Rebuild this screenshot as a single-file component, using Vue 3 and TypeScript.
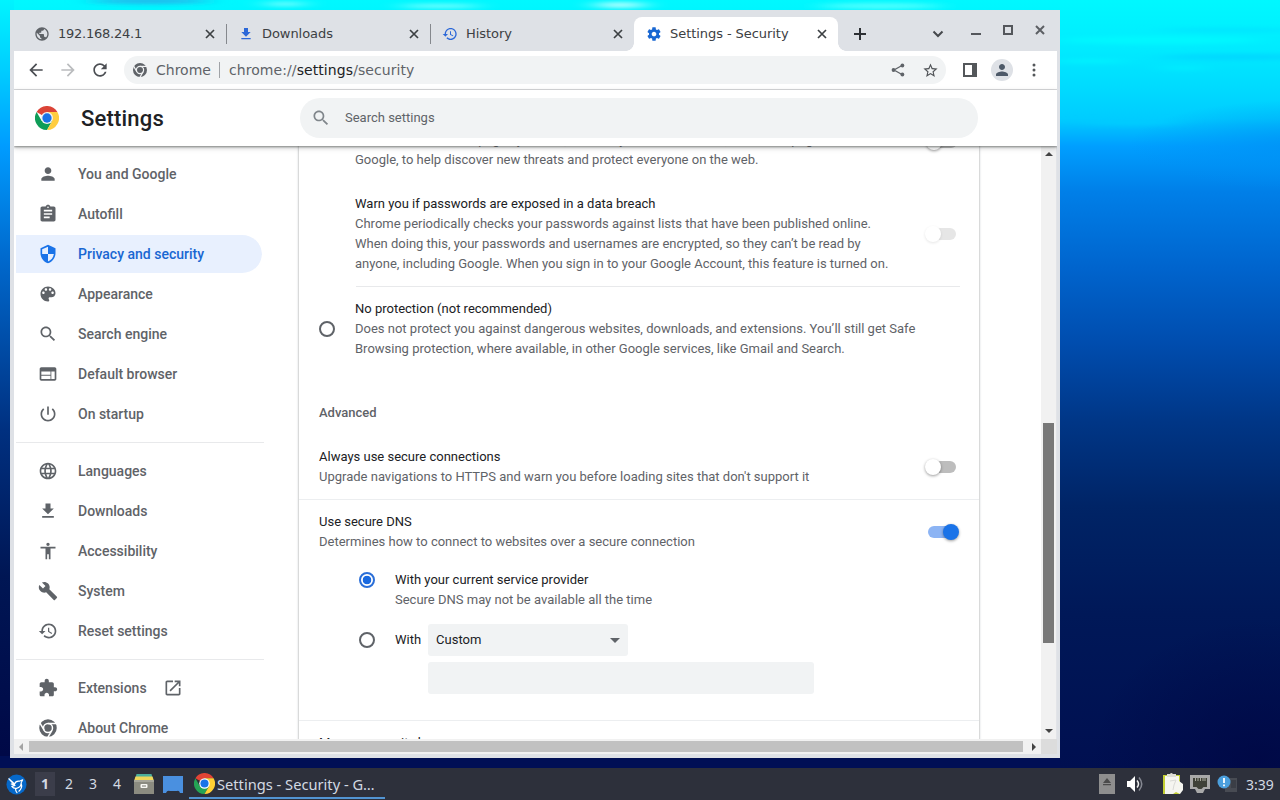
<script setup lang="ts">
interface NavItem { label: string; icon: string; active?: boolean; external?: boolean }
interface Tab { title: string; icon: string; color: string; active?: boolean }

const icons: Record<string, string> = {
  person: 'M12 12c2.21 0 4-1.79 4-4s-1.79-4-4-4-4 1.79-4 4 1.79 4 4 4zm0 2c-2.67 0-8 1.34-8 4v2h16v-2c0-2.66-5.33-4-8-4z',
  autofill: 'M19 3h-4.18C14.4 1.84 13.3 1 12 1s-2.4.84-2.82 2H5c-1.1 0-2 .9-2 2v14c0 1.1.9 2 2 2h14c1.1 0 2-.9 2-2V5c0-1.1-.9-2-2-2zm-7 0c.55 0 1 .45 1 1s-.45 1-1 1-1-.45-1-1 .45-1 1-1zm2 14H7v-2h7v2zm3-4H7v-2h10v2zm0-4H7V7h10v2z',
  shield: 'M12 1L3 5v6c0 5.55 3.84 10.74 9 12 5.16-1.26 9-6.45 9-12V5l-9-4zm0 10.99h7c-.53 4.12-3.28 7.79-7 8.94V12H5V6.3l7-3.11v8.8z',
  palette: 'M12 3c-4.97 0-9 4.03-9 9s4.03 9 9 9c.83 0 1.5-.67 1.5-1.5 0-.39-.15-.74-.39-1.01-.23-.26-.38-.61-.38-.99 0-.83.67-1.5 1.5-1.5H16c2.76 0 5-2.24 5-5 0-4.42-4.03-8-9-8zm-5.5 9c-.83 0-1.5-.67-1.5-1.5S5.67 9 6.5 9 8 9.67 8 10.500 7.330 12 6.500 12zm3-4C8.670 8 8 7.330 8 6.500S8.670 5 9.500 5s1.500.67 1.500 1.500S10.330 8 9.500 8zm5 0c-.83 0-1.500-.67-1.500-1.500S13.670 5 14.500 5s1.500.67 1.500 1.500S15.330 8 14.500 8zm3 4c-.83 0-1.500-.67-1.500-1.500S16.670 9 17.500 9s1.500.67 1.500 1.500-.67 1.500-1.500 1.500z',
  search: 'M15.5 14h-.79l-.28-.27C15.41 12.59 16 11.11 16 9.500 16 5.910 13.090 3 9.500 3S3 5.910 3 9.500 5.910 16 9.500 16c1.610 0 3.090-.59 4.230-1.570l.27.28v.79l5 4.990L20.490 19l-4.990-5zm-6 0C7.010 14 5 11.990 5 9.500S7.010 5 9.500 5 14 7.010 14 9.500 11.990 14 9.500 14z',
  browser: 'M20 4H4c-1.100 0-1.990.9-1.990 2L2 18c0 1.100.9 2 2 2h16c1.100 0 2-.9 2-2V6c0-1.100-.9-2-2-2zm-5 14H4v-4h11v4zm0-5H4V9h11v4zm5 5h-4V9h4v9z',
  power: 'M13 3h-2v10h2V3zm4.830 2.170l-1.420 1.420C17.990 7.860 19 9.810 19 12c0 3.870-3.130 7-7 7s-7-3.130-7-7c0-2.190 1.010-4.140 2.580-5.420L6.170 5.170C4.230 6.820 3 9.260 3 12c0 4.970 4.030 9 9 9s9-4.030 9-9c0-2.740-1.230-5.180-3.170-6.830z',
  globe: 'M11.990 2C6.470 2 2 6.480 2 12s4.470 10 9.990 10C17.520 22 22 17.520 22 12S17.520 2 11.990 2zm6.930 6h-2.950c-.32-1.250-.78-2.450-1.380-3.560 1.840.63 3.370 1.910 4.330 3.560zM12 4.040c.83 1.200 1.480 2.530 1.910 3.960h-3.820c.43-1.430 1.080-2.760 1.910-3.960zM4.260 14C4.100 13.360 4 12.690 4 12s.1-1.360.26-2h3.380c-.08.66-.14 1.320-.14 2s.06 1.340.14 2H4.260zm.82 2h2.950c.32 1.250.78 2.450 1.380 3.560-1.840-.63-3.370-1.900-4.330-3.560zm2.950-8H5.080c.96-1.660 2.490-2.930 4.330-3.560C8.810 5.550 8.350 6.750 8.030 8zM12 19.960c-.83-1.200-1.480-2.530-1.910-3.960h3.820c-.43 1.430-1.080 2.760-1.910 3.960zM14.340 14H9.660c-.09-.66-.16-1.320-.16-2s.07-1.350.16-2h4.680c.09.65.16 1.320.16 2s-.07 1.340-.16 2zm.25 5.560c.6-1.110 1.060-2.310 1.380-3.560h2.950c-.96 1.650-2.490 2.930-4.330 3.560zM16.360 14c.08-.66.14-1.320.14-2s-.06-1.340-.14-2h3.380c.16.64.26 1.310.26 2s-.1 1.360-.26 2h-3.380z',
  world: 'M12 2C6.480 2 2 6.480 2 12s4.480 10 10 10 10-4.480 10-10S17.520 2 12 2zm-1 17.930c-3.950-.49-7-3.850-7-7.930 0-.62.08-1.210.21-1.790L9 15v1c0 1.100.9 2 2 2v1.930zm6.900-2.540c-.26-.81-1-1.390-1.900-1.390h-1v-3c0-.55-.45-1-1-1H8v-2h2c.55 0 1-.45 1-1V7h2c1.100 0 2-.9 2-2v-.41c2.930 1.190 5 4.060 5 7.410 0 2.080-.8 3.970-2.100 5.390z',
  download: 'M19 9h-4V3H9v6H5l7 7 7-7zM5 18v2h14v-2H5z',
  accessibility: 'M12 2c1.100 0 2 .9 2 2s-.9 2-2 2-2-.9-2-2 .9-2 2-2zm9 7h-6v13h-2v-6h-2v6H9V9H3V7h18v2z',
  wrench: 'M22.700 19l-9.100-9.100c.9-2.300.4-5-1.500-6.900-2-2-5-2.400-7.400-1.300L9 6 6 9 1.600 4.700C.4 7.100.9 10.100 2.900 12.100c1.900 1.900 4.600 2.400 6.900 1.500l9.100 9.100c.4.400 1 .400 1.400 0l2.300-2.300c.5-.4.5-1.100.1-1.400z',
  history: 'M13 3c-4.970 0-9 4.030-9 9H1l3.890 3.890.07.14L9 12H6c0-3.870 3.130-7 7-7s7 3.130 7 7-3.130 7-7 7c-1.930 0-3.680-.79-4.940-2.060l-1.420 1.420C8.270 19.990 10.510 21 13 21c4.970 0 9-4.030 9-9s-4.030-9-9-9zm-1 5v5l4.280 2.540.72-1.210-3.500-2.080V8H12z',
  puzzle: 'M20.500 11H19V7c0-1.100-.9-2-2-2h-4V3.500C13 2.120 11.880 1 10.500 1S8 2.120 8 3.500V5H4c-1.100 0-1.990.9-1.990 2v3.800H3.500c1.490 0 2.700 1.210 2.700 2.700s-1.210 2.700-2.700 2.700H2V20c0 1.100.9 2 2 2h3.800v-1.500c0-1.490 1.210-2.700 2.700-2.700 1.490 0 2.700 1.210 2.700 2.700V22H17c1.100 0 2-.9 2-2v-4h1.500c1.380 0 2.500-1.120 2.500-2.500S21.880 11 20.500 11z',
  chrome: 'M12 1.500a10.500 10.500 0 1 0 0 21a10.500 10.500 0 1 0 0-21z',
  external: 'M19 19H5V5h7V3H5c-1.110 0-2 .9-2 2v14c0 1.100.89 2 2 2h14c1.100 0 2-.9 2-2v-7h-2v7zM14 3v2h3.590l-9.830 9.830 1.410 1.410L19 6.410V10h2V3h-7z',
  gear: 'M19.430 12.980c.04-.32.07-.64.07-.98s-.03-.66-.07-.98l2.110-1.650c.19-.15.24-.42.12-.64l-2-3.460c-.12-.22-.39-.3-.61-.22l-2.490 1c-.52-.4-1.080-.73-1.690-.98l-.38-2.650C14.460 2.180 14.250 2 14 2h-4c-.25 0-.46.18-.49.42l-.38 2.650c-.61.25-1.170.59-1.690.98l-2.490-1c-.23-.09-.49 0-.61.22l-2 3.460c-.13.22-.07.49.12.64l2.110 1.650c-.04.32-.07.65-.07.98s.03.66.07.98l-2.110 1.650c-.19.15-.24.42-.12.64l2 3.460c.12.22.39.3.61.22l2.490-1c.52.4 1.080.73 1.690.98l.38 2.650c.03.24.24.42.49.42h4c.25 0 .46-.18.49-.42l.38-2.650c.61-.25 1.170-.59 1.690-.98l2.490 1c.23.09.49 0 .61-.22l2-3.460c.12-.22.07-.49-.12-.64l-2.110-1.650zM12 15.500c-1.930 0-3.500-1.570-3.500-3.500s1.570-3.500 3.500-3.500 3.500 1.570 3.500 3.500-1.570 3.500-3.500 3.500z',
  back: 'M20 11H7.830l5.590-5.590L12 4l-8 8 8 8 1.410-1.410L7.830 13H20v-2z',
  forward: 'M12 4l-1.410 1.410L16.170 11H4v2h12.170l-5.580 5.590L12 20l8-8z',
  reload: 'M17.650 6.350C16.200 4.900 14.210 4 12 4c-4.420 0-7.990 3.580-7.990 8s3.570 8 7.990 8c3.730 0 6.840-2.550 7.730-6h-2.080c-.82 2.330-3.040 4-5.650 4-3.310 0-6-2.690-6-6s2.690-6 6-6c1.660 0 3.140.69 4.220 1.780L13 11h7V4l-2.350 2.350z',
  star: 'M22 9.240l-7.190-.62L12 2 9.190 8.630 2 9.240l5.460 4.730L5.820 21 12 17.270 18.180 21l-1.630-7.030L22 9.240zM12 15.400l-3.760 2.270 1-4.280-3.320-2.880 4.380-.38L12 6.100l1.710 4.040 4.380.38-3.320 2.880 1 4.280L12 15.400z',
}

const tabs: Tab[] = [
  { title: '192.168.24.1', icon: 'world', color: '#5f6368' },
  { title: 'Downloads', icon: 'download', color: '#2c68d8' },
  { title: 'History', icon: 'history', color: '#2c68d8' },
  { title: 'Settings - Security', icon: 'gear', color: '#1967d2', active: true },
]

const groups: NavItem[][] = [
  [
    { label: 'You and Google', icon: 'person' },
    { label: 'Autofill', icon: 'autofill' },
    { label: 'Privacy and security', icon: 'shield', active: true },
    { label: 'Appearance', icon: 'palette' },
    { label: 'Search engine', icon: 'search' },
    { label: 'Default browser', icon: 'browser' },
    { label: 'On startup', icon: 'power' },
  ],
  [
    { label: 'Languages', icon: 'globe' },
    { label: 'Downloads', icon: 'download' },
    { label: 'Accessibility', icon: 'accessibility' },
    { label: 'System', icon: 'wrench' },
    { label: 'Reset settings', icon: 'history' },
  ],
  [
    { label: 'Extensions', icon: 'puzzle', external: true },
    { label: 'About Chrome', icon: 'chrome' },
  ],
]
const desktops = ['1', '2', '3', '4']
</script>

<template>
  <div class="desktop">
    <svg class="wallpaper" viewBox="0 0 1280 768" preserveAspectRatio="none">
      <defs>
        <linearGradient id="sea" x1="0" y1="0" x2="0" y2="1">
          <stop offset="0" stop-color="#00f8ff" />
          <stop offset=".06" stop-color="#00ecff" />
          <stop offset=".11" stop-color="#00dcff" />
          <stop offset=".155" stop-color="#00ccff" />
          <stop offset=".19" stop-color="#009fff" />
          <stop offset=".25" stop-color="#007fe8" />
          <stop offset=".35" stop-color="#0064cd" />
          <stop offset=".45" stop-color="#004cad" />
          <stop offset=".55" stop-color="#003686" />
          <stop offset=".66" stop-color="#002466" />
          <stop offset=".8" stop-color="#001858" />
          <stop offset="1" stop-color="#000f50" />
        </linearGradient>
        <linearGradient id="leftsea" x1="0" y1="0" x2="0" y2="1">
          <stop offset="0" stop-color="#00f4ff" />
          <stop offset=".09" stop-color="#00ceff" />
          <stop offset=".19" stop-color="#009cff" />
          <stop offset=".34" stop-color="#0068cc" />
          <stop offset=".56" stop-color="#003080" />
          <stop offset=".75" stop-color="#001654" />
          <stop offset="1" stop-color="#000846" />
        </linearGradient>
        <radialGradient id="deep"><stop offset="0" stop-color="#000642" stop-opacity=".7" /><stop offset="1" stop-color="#000642" stop-opacity="0" /></radialGradient>
        <radialGradient id="dusk"><stop offset="0" stop-color="#0090f4" stop-opacity=".7" /><stop offset="1" stop-color="#0090f4" stop-opacity="0" /></radialGradient>
        <filter id="soft" x="-20%" y="-200%" width="140%" height="500%"><feGaussianBlur stdDeviation="12 2" /></filter>
        <mask id="chrome-gaps" maskUnits="userSpaceOnUse" x="0" y="0" width="24" height="24">
          <path d="M0 0h24v24H0z" fill="#fff" />
          <g fill="none" stroke="#000" stroke-width="1.800">
            <circle cx="12" cy="12" r="5.400" />
            <path id="gap" d="M12 6.600h12" />
            <path d="M12 6.600h12" transform="rotate(120 12 12)" />
            <path d="M12 6.600h12" transform="rotate(240 12 12)" />
          </g>
        </mask>
      </defs>
      <rect width="1280" height="768" fill="url(#sea)" />
      <rect width="14" height="768" fill="url(#leftsea)" />
      <rect y="756" width="1060" height="12" fill="#000f55" />
      <ellipse cx="1300" cy="145" rx="170" ry="45" fill="url(#dusk)" />
      <ellipse cx="1260" cy="760" rx="170" ry="140" fill="url(#deep)" />
      <g filter="url(#soft)">
        <ellipse cx="150" cy="1" rx="60" ry="3" fill="#20b8ec" />
        <ellipse cx="285" cy="4" rx="20" ry="2" fill="#8fffff" />
        <ellipse cx="440" cy="6" rx="40" ry="2" fill="#80ffff" />
        <ellipse cx="620" cy="5" rx="26" ry="3" fill="#b8ffff" />
        <ellipse cx="880" cy="6" rx="60" ry="3" fill="#50ffff" />
        <ellipse cx="1160" cy="40" rx="100" ry="4" fill="#00f8ff" />
        <ellipse cx="1090" cy="61" rx="35" ry="2" fill="#00f4ff" />
        <ellipse cx="1184" cy="68" rx="24" ry="2" fill="#00f0ff" />
        <ellipse cx="1230" cy="30" rx="70" ry="2" fill="#00e4ff" />
        <ellipse cx="1240" cy="57" rx="80" ry="3" fill="#00d8ff" />
        <ellipse cx="1130" cy="122" rx="50" ry="3" fill="#00ccff" />
      </g>
    </svg>

    <section class="window">
      <header class="tabstrip">
        <div v-for="t in tabs" :key="t.title" class="tab" :class="{ active: t.active }">
          <svg class="favicon" viewBox="0 0 24 24"><path :d="icons[t.icon]" :fill="t.color" /></svg>
          <span class="tab-title">{{ t.title }}</span>
          <svg class="close" viewBox="0 0 10 10"><path d="M1 1l8 8M9 1l-8 8" stroke="#3c4043" stroke-width="1.700" /></svg>
        </div>
        <svg class="plus" viewBox="0 0 12 12"><path d="M6 0v12M0 6h12" stroke="#2d3034" stroke-width="2" /></svg>
        <div class="controls">
          <svg width="12" height="8" viewBox="0 0 12 8"><path d="M1.500 1.500L6 6l4.500-4.500" fill="none" stroke="#45484c" stroke-width="2" /></svg>
          <svg class="mini" width="10" height="2" viewBox="0 0 10 2"><path d="M0 1h10" stroke="#54575c" stroke-width="2" /></svg>
          <svg class="maxi" width="10" height="10" viewBox="0 0 10 10"><path d="M1 1h8v8H1z" fill="none" stroke="#54575c" stroke-width="2" /></svg>
          <svg class="shut" width="10" height="10" viewBox="0 0 10 10"><path d="M1 1l8 8M9 1L1 9" stroke="#5c5f64" stroke-width="2" /></svg>
        </div>
      </header>

      <div class="client">
        <div class="toolbar">
          <div class="nav-buttons">
            <svg viewBox="0 0 24 24"><path :d="icons.back" fill="#4b4e53" /></svg>
            <svg viewBox="0 0 24 24"><path :d="icons.forward" fill="#babcbe" /></svg>
            <svg viewBox="0 0 24 24"><path :d="icons.reload" fill="#4b4e53" /></svg>
          </div>
          <div class="omnibox">
            <svg class="site" viewBox="0 0 24 24"><path :d="icons.chrome" fill="#5f6368" mask="url(#chrome-gaps)" /></svg>
            <span>Chrome</span>
            <i class="bar"></i>
            <span class="url">chrome://<b>settings</b>/security</span>
            <svg class="share" viewBox="0 0 14 14"><path d="M11 2.500L3 7l8 4.500" fill="none" stroke="#5f6368" stroke-width="1.300" /><circle cx="11.400" cy="2.500" r="1.900" fill="#5f6368" /><circle cx="2.500" cy="7" r="1.900" fill="#5f6368" /><circle cx="11.400" cy="11.500" r="1.900" fill="#5f6368" /></svg>
            <svg class="star" viewBox="0 0 24 24"><path :d="icons.star" fill="#505357" /></svg>
          </div>
          <svg class="panel" viewBox="0 0 14 14"><path d="M0 0h14v14H0zM2 2v10h7V2z" fill="#54575a" fill-rule="evenodd" /></svg>
          <span class="avatar"><svg viewBox="0 0 24 24"><path :d="icons.person" fill="#4d5968" /></svg></span>
          <svg class="dots" viewBox="0 0 4 14"><circle cx="2" cy="2" r="1.500" /><circle cx="2" cy="7" r="1.500" /><circle cx="2" cy="12" r="1.500" /></svg>
        </div>

        <div class="header">
          <svg class="logo" viewBox="0 0 48 48">
            <path d="M24 24L3.200 12A24 24 0 0 1 44.800 12H24z" fill="#db4437" />
            <path d="M24 24L13.600 30 3.200 12A24 24 0 0 0 24 48l10.400-18z" fill="#0f9d58" />
            <path d="M24 12h20.800A24 24 0 0 1 24 48l10.400-18z" fill="#ffcd40" />
            <circle cx="24" cy="24" r="12" fill="#f1f1f1" /><circle cx="24" cy="24" r="9.300" fill="#1a73e8" />
          </svg>
          <h1>Settings</h1>
          <div class="search"><svg viewBox="0 0 24 24"><path :d="icons.search" fill="#80868b" /></svg><span>Search settings</span></div>
        </div>

        <div class="body">
          <nav>
            <div v-for="(g, i) in groups" :key="i" class="group">
              <div v-for="n in g" :key="n.label" class="item" :class="{ active: n.active }">
                <svg viewBox="0 0 24 24"><path :d="icons[n.icon]" :mask="n.icon === 'chrome' ? 'url(#chrome-gaps)' : undefined" /></svg>
                <span>{{ n.label }}</span>
                <svg v-if="n.external" class="ext" viewBox="0 0 24 24"><path :d="icons.external" /></svg>
              </div>
            </div>
          </nav>

          <main>
            <div class="row nested first">
              <p><small>Sends URLs of some pages you visit, limited system information, and some page content to<br>Google, to help discover new threats and protect everyone on the web.</small></p>
              <span class="toggle"></span>
            </div>
            <div class="row nested breach">
              <p>Warn you if passwords are exposed in a data breach<br><small>Chrome periodically checks your passwords against lists that have been published online.<br>When doing this, your passwords and usernames are encrypted, so they can’t be read by<br>anyone, including Google. When you sign in to your Google Account, this feature is turned on.</small></p>
              <span class="toggle disabled"></span>
            </div>
            <div class="row none">
              <span class="radio"></span>
              <p>No protection (not recommended)<br><small>Does not protect you against dangerous websites, downloads, and extensions. You’ll still get Safe<br>Browsing protection, where available, in other Google services, like Gmail and Search.</small></p>
            </div>
            <h2>Advanced</h2>
            <div class="row always">
              <p>Always use secure connections<br><small>Upgrade navigations to HTTPS and warn you before loading sites that don't support it</small></p>
              <span class="toggle"></span>
            </div>
            <div class="row dns">
              <p>Use secure DNS<br><small>Determines how to connect to websites over a secure connection</small></p>
              <span class="toggle on"></span>
            </div>
            <div class="row option">
              <span class="radio checked"></span>
              <p>With your current service provider<br><small>Secure DNS may not be available all the time</small></p>
            </div>
            <div class="row custom">
              <span class="radio"></span>
              <p>With</p>
              <div class="select"><span>Custom</span><i></i></div>
            </div>
            <div class="field"></div>
            <div class="row keys"><p>Manage security keys</p></div>
          </main>

          <div class="vscroll"><i class="arrow up"></i><i class="thumb"></i><i class="arrow down"></i></div>
        </div>
        <div class="hscroll"><i class="arrow left"></i><i class="thumb"></i><i class="arrow right"></i><i class="corner"></i></div>
      </div>
    </section>

    <footer class="taskbar">
      <svg class="menu" viewBox="0 0 22 22">
        <circle cx="11" cy="11" r="10.500" fill="#0668c9" />
        <path d="M3 5l6 5.500q1-3.500 5-3l3.500-1.500-1.500 3q0 5-5 6-3 .5-5-2l3.500-1L5.500 10.500l3 .5z" fill="#0668c9" stroke="#fff" stroke-width="1.200" stroke-linejoin="round" />
        <path d="M10 15.500q0 2.500 1.500 4M16 10.500q1.500 4-2.500 7.500" fill="none" stroke="#fff" stroke-width="1.300" stroke-linecap="round" />
      </svg>
      <span v-for="d in desktops" :key="d" class="desk" :class="{ current: d === '1' }">{{ d }}</span>
      <svg class="files" viewBox="0 0 20 20"><path d="M2.500 0h15l1 4h-17z" fill="#4caf9c" /><path d="M1.500 2.500h17L20 7H0z" fill="#f0d65a" /><path d="M0 6h20v14H0z" fill="#8b8b80" /><path d="M0 6h20v2H0z" fill="#a6a69a" /><rect x="6.500" y="10" width="7" height="4" rx="1" fill="#f8f8f2" /><path d="M8 12h4" stroke="#77776f" /></svg>
      <svg class="show" viewBox="0 0 20 17"><path d="M0 0h20v17h-3q-1-3-3-2H7q-3-1-4 2H0z" fill="#4a90e0" /></svg>
      <div class="task">
        <svg viewBox="0 0 48 48"><path d="M24 24L3.200 12A24 24 0 0 1 44.800 12H24z" fill="#e24435" /><path d="M24 24L13.600 30 3.200 12A24 24 0 0 0 24 48l10.400-18z" fill="#24a454" /><path d="M24 12h20.800A24 24 0 0 1 24 48l10.400-18z" fill="#ffd034" /><circle cx="24" cy="24" r="12" fill="#fff" /><circle cx="24" cy="24" r="9.300" fill="#1a73e8" /></svg>
        <span>Settings - Security - G…</span>
      </div>
      <div class="tray">
        <svg class="eject" viewBox="0 0 16 20"><path d="M0 0h16v20H0z" fill="#8e8e8e" /><path d="M8 4l4 5H4zM4 10h8v1.300H4z" fill="#4b4b4b" /></svg>
        <svg class="volume" viewBox="0 0 16 16"><path d="M0 5h3l5-5v16l-5-5H0z" fill="#fff" /><path d="M10 4.500q3 3.500 0 7" fill="none" stroke="#eee" stroke-width="1.500" /><path d="M12 1.500q5.500 6.500 0 13" fill="none" stroke="#858892" stroke-width="1.500" /></svg>
        <svg class="clip" viewBox="0 0 20 22"><path d="M0 2h17v19H0z" fill="#c3cf34" /><path d="M2 3h14v5l4 3v6l-3 4-4-2-3 2H2z" fill="#f5f5f0" /><path d="M4 1h3q1-2 3 0h3v3H4z" fill="#ddddd5" /><path d="M7 8l6-1-2 5-1 5" fill="none" stroke="#dadad6" /></svg>
        <svg class="net" viewBox="0 0 20 18"><path d="M0 0h20v14h-5l-2 4H7l-2-4H0z" fill="#a9a9a9" /><path d="M3 3h14v9h-3.500l-2 2h-3l-2-2H3z" fill="#3f4138" /><path d="M5.500 3v3M8 3v3M10.500 3v3M13 3v3M15 3v3" stroke="#c5c5b9" stroke-width=".8" /></svg>
        <svg class="update" viewBox="0 0 20 18"><path d="M8 3h12v14H8z" fill="#484b53" /><path d="M14 5h5v8h-5z" fill="#3b3e46" /><circle cx="7" cy="7" r="6.500" fill="#4b9fdd" /><path d="M7 3v5M7 9.500v1.800" stroke="#fff" stroke-width="1.800" /></svg>
        <span class="clock">3:39</span>
      </div>
    </footer>
  </div>
</template>

<style>
body { margin: 0; overflow: hidden; }
</style>

<style scoped>
* { box-sizing: border-box; }
svg { display: block; flex: none; }
.desktop { position: relative; width: 1280px; height: 800px; overflow: hidden; display: flex; flex-direction: column; background: #001050; font-family: Roboto, "Liberation Sans", sans-serif; }
.wallpaper { position: absolute; left: 0; top: 0; width: 1280px; height: 768px; }
.window { position: relative; width: 1050px; height: 748px; margin: 10px 0 10px 10px; padding: 0 3px 4px 4px; background: #dee1e6; display: flex; flex-direction: column; }
.tabstrip { height: 41px; flex: none; display: flex; padding: 7px 0 0 8px; font: 13px "DejaVu Sans", sans-serif; color: #3c4043; }
.tab { position: relative; width: 204px; height: 34px; display: flex; align-items: center; padding: 0 11px 0 12px; }
.tab::after { content: ''; position: absolute; right: -1px; top: 7px; width: 1px; height: 20px; background: #85888d; }
.tab:nth-child(3)::after, .tab.active::after { display: none; }
.tab.active { background: #fff; border-radius: 8px 8px 0 0; }
.tab.active::before { content: ''; position: absolute; left: -8px; right: -8px; bottom: 0; height: 8px; background: radial-gradient(circle at 0 0, transparent 7.500px, #fff 8px) left / 8px 8px no-repeat, radial-gradient(circle at 100% 0, transparent 7.500px, #fff 8px) right / 8px 8px no-repeat; }
.favicon { width: 16px; height: 16px; margin-right: 8px; }
.tab-title { flex: 1; white-space: nowrap; padding-bottom: 2px; letter-spacing: -.06px; }
.tab:first-child .tab-title { letter-spacing: -.24px; }
.close { width: 10px; height: 10px; }
.plus { width: 12px; height: 12px; margin: 11px 0 0 16px; }
.controls { display: flex; gap: 22px; margin-left: 66px; }
.controls svg { margin-top: 13px; }
.controls .mini { margin: 16px 0 0 5px; }
.controls .maxi, .controls .shut { margin-top: 8px; }
.client { flex: 1; min-height: 0; display: flex; flex-direction: column; background: #fff; overflow: hidden; }
.toolbar { height: 39px; flex: none; display: flex; align-items: center; border-bottom: 1px solid #dcdddf; padding-left: 12px; }
.nav-buttons { display: flex; gap: 12px; width: 98px; }
.nav-buttons svg { width: 20px; height: 20px; }
.omnibox { width: 822px; height: 28px; border-radius: 14px; background: #f1f3f4; display: flex; align-items: center; padding-left: 8px; font: 14px "DejaVu Sans", sans-serif; color: #5f6368; white-space: nowrap; }
.site { width: 16px; height: 16px; margin-right: 8px; }
.bar { width: 1px; height: 16px; background: #a0a3a7; margin: 0 9px 0 8px; }
.url { flex: 1; letter-spacing: .08px; }
.url b { font-weight: 400; color: #202124; }
.share { width: 14px; height: 14px; margin-right: 17px; }
.star { width: 17px; height: 17px; margin-right: 7px; }
.panel { width: 14px; height: 14px; margin-left: 17px; }
.avatar { width: 22px; height: 22px; border-radius: 50%; background: #dee1e6; margin-left: 14px; display: grid; place-items: center; }
.avatar svg { width: 18px; height: 18px; }
.dots { width: 4px; height: 14px; margin-left: 19px; fill: #54575a; }
.header { position: relative; z-index: 2; height: 56px; flex: none; display: flex; align-items: center; background: #fff; padding-left: 21px; box-shadow: 0 1px 2px rgba(60,64,60,.55), 0 2px 5px rgba(60,64,67,.25); }
.logo { width: 24px; height: 24px; }
h1 { margin: 2px 0 0 22px; width: 219px; font-size: 22px; font-weight: 500; line-height: 28px; color: #202124; letter-spacing: .2px; }
.search { width: 678px; height: 40px; border-radius: 20px; background: #f1f3f4; display: flex; align-items: center; gap: 14px; padding-left: 11px; font-size: 13px; color: #5f6368; }
.search span { padding-bottom: 1px; }
.search svg { width: 20px; height: 20px; }
.body { flex: 1; min-height: 0; display: flex; overflow: hidden; }
nav { width: 285px; flex: none; padding: 8px 0 0 2px; overflow: hidden; }
.group + .group { border-top: 1px solid #e8e9eb; margin-top: 8px; padding-top: 8px; }
.group { width: 248px; }
.item { width: 246px; height: 40px; display: flex; align-items: center; padding-left: 22px; font-size: 14px; font-weight: 500; color: #5f6368; border-top: 1px solid transparent; border-bottom: 1px solid transparent; background-clip: padding-box; border-radius: 0 20px 20px 0; }
.item > svg { width: 20px; height: 20px; fill: #5f6368; }
.item span { margin-left: 20px; }
.item.active { background-color: #e8f0fe; color: #1967d2; }
.item.active svg { fill: #1a73e8; }
.item svg.ext { margin-left: 16px; }
main { width: 680px; height: 660px; margin-top: -16px; flex: none; font-size: 13px; line-height: 20px; color: #202124; box-shadow: 0 0 2px rgba(60,64,67,.4), 0 1px 3px rgba(60,64,67,.18); background: #fff; }
p { margin: 0; white-space: nowrap; flex: none; }
small { font-size: 13px; color: #5f6368; }
.row { display: flex; align-items: center; padding: 0 20px; }
.nested { padding-left: 56px; }
.first { height: 40px; }
.first .toggle { margin-top: -16px; margin-right: 2px; }
.breach { height: 117px; padding-top: 24px; align-items: flex-start; margin: 0 19px 0 57px; padding-left: 0; padding-right: 1px; border-bottom: 1px solid #e8e9eb; }
.breach p { margin-left: -1px; }
.breach .toggle { margin-top: 34px; }
.none { height: 60px; margin-top: 12px; }
.none .radio { margin-right: 20px; }
h2 { font-size: 13px; line-height: 20px; font-weight: 500; color: #5f6368; margin: 44px 20px 24px; }
.always { height: 53px; align-items: flex-start; border-bottom: 1px solid #eceef0; }
.always .toggle { margin-top: 14px; }
.dns { height: 40px; margin-top: 12px; }
.option { height: 40px; margin-top: 18px; padding-left: 60px; align-items: flex-start; }
.option .radio, .custom .radio { margin-right: 20px; }
.option .radio { margin-top: 2px; }
.custom { height: 32px; margin-top: 14px; padding-left: 60px; }
.select { width: 200px; height: 32px; background: #f1f3f4; border-radius: 3px; margin-left: 7px; padding: 0 8px; display: flex; align-items: center; justify-content: space-between; }
.select i { border: 5px solid transparent; border-top-color: #5f6368; border-bottom: 0; }
.field { width: 386px; height: 32px; margin: 6px 0 26px 129px; background: #f1f3f4; border-radius: 3px; }
.keys { border-top: 1px solid #eceef0; padding-top: 12px; }
.radio { width: 16px; height: 16px; flex: none; border: 2px solid #5f6368; border-radius: 50%; }
.radio.checked { border-color: #2b6fd8; background: radial-gradient(circle, #1a6ae0 0 4px, #fff 4.600px); }
.toggle { position: relative; width: 28px; height: 12px; margin-left: auto; margin-right: 3px; border-radius: 6px; background: #bdbdbd; flex: none; }
.toggle::after { content: ''; position: absolute; width: 16px; height: 16px; left: -3px; top: -2px; border-radius: 50%; background: #fff; box-shadow: 0 1px 3px rgba(0,0,0,.4); }
.toggle.disabled { background: #e6e6e6; }
.toggle.disabled::after { box-shadow: 0 1px 3px rgba(0,0,0,.1); }
.toggle.on { background: #8cb4f4; }
.toggle.on::after { left: 15px; background: #1a73e8; }
.vscroll { width: 16px; margin-left: auto; background: #f1f1f1; border-right: 1px solid #e2e4e8; display: flex; flex-direction: column; align-items: center; padding: 6px 0; }
.vscroll .thumb { width: 11px; height: 220px; background: #787878; margin-top: 267px; }
.arrow { width: 0; height: 0; border: 4px solid transparent; }
.up { border-top: 0; border-bottom-color: #444; }
.down { border-bottom: 0; border-top-color: #444; margin-top: auto; }
.hscroll { height: 15px; flex: none; display: flex; align-items: center; background: #f1f1f1; padding-left: 5px; }
.hscroll .thumb { width: 994px; height: 11px; background: #c1c1c1; margin-left: 6px; }
.left { border-left: 0; border-right-color: #a3a3a3; }
.right { border-right: 0; border-left-color: #444; margin-left: 9px; }
.corner { width: 16px; height: 15px; margin-left: auto; background: #dcdcdc; }
.taskbar { position: relative; height: 32px; flex: none; background: #2d303b; display: flex; align-items: center; padding-left: 6px; font: 14.670px "Noto Sans", sans-serif; color: #d3dae3; }
.menu { width: 21px; height: 21px; margin-right: 8px; }
.desk { width: 20px; height: 24px; margin-right: 4px; text-align: center; line-height: 24px; font-size: 14px; }
.desk.current { background: #3b3d4a; font-weight: 700; }
.files { width: 20px; height: 20px; margin-left: 3px; }
.show { width: 20px; height: 17px; margin-left: 9px; }
.task { height: 31px; width: 196px; margin-left: 6px; margin-bottom: 1px; display: flex; align-items: center; padding: 2px 0 0 5px; border-bottom: 2px solid #5294d2; white-space: nowrap; }
.task svg { width: 21px; height: 21px; }
.task span { margin-left: 2px; }
.tray { margin-left: auto; display: flex; align-items: center; padding-right: 5px; }
.eject { width: 16px; height: 20px; }
.volume { width: 16px; height: 16px; margin-left: 12px; }
.clip { width: 20px; height: 22px; margin-left: 20px; }
.net { width: 20px; height: 18px; margin-left: 7px; }
.update { width: 20px; height: 18px; margin-left: 7px; }
.clock { width: 29px; margin-left: 9px; font-size: 14px; }
</style>
